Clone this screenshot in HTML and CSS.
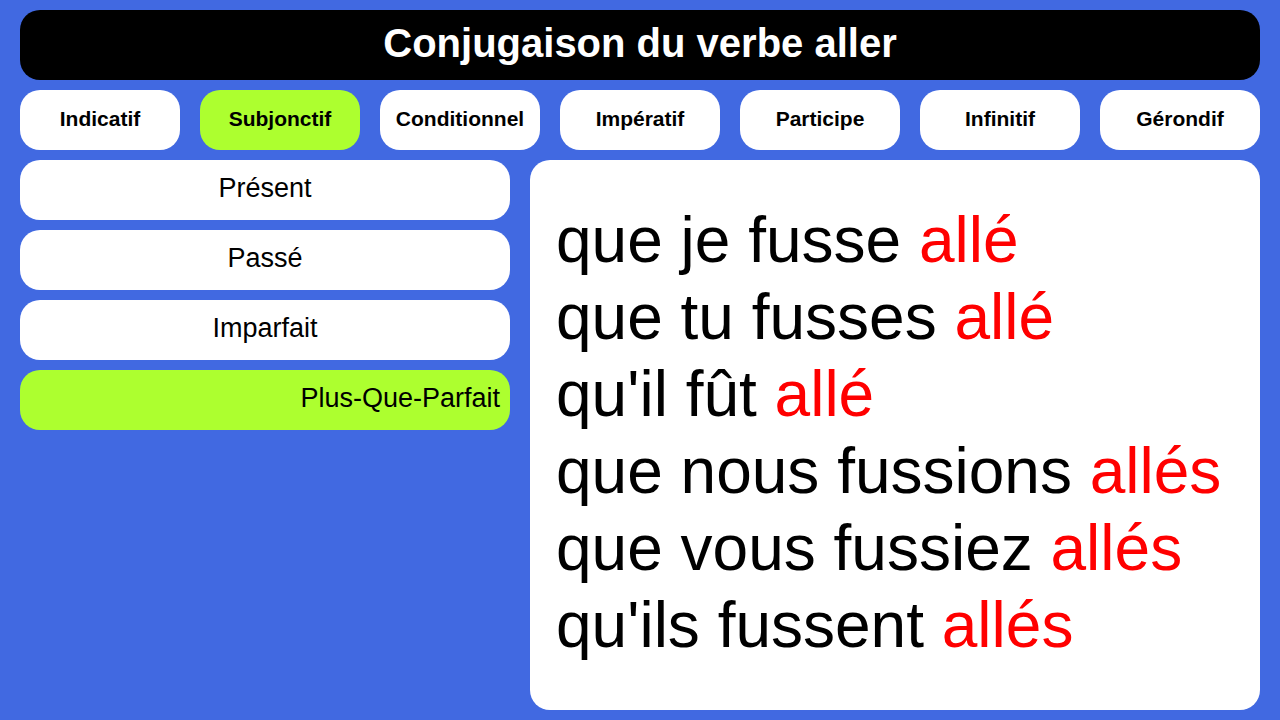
FILE: index.html
```html
<!DOCTYPE html>
<html lang="fr">
<head>
<meta charset="utf-8">
<title>Conjugaison du verbe aller</title>
<link rel="stylesheet" href="styles.css">
</head>
<body>
<div class="page">
  <header class="title">Conjugaison du verbe aller</header>
  <nav class="tabs">
    <div class="tab">Indicatif</div>
    <div class="tab active">Subjonctif</div>
    <div class="tab">Conditionnel</div>
    <div class="tab">Impératif</div>
    <div class="tab">Participe</div>
    <div class="tab">Infinitif</div>
    <div class="tab">Gérondif</div>
  </nav>
  <main class="content">
    <div class="tenses">
      <div class="tense">Présent</div>
      <div class="tense">Passé</div>
      <div class="tense">Imparfait</div>
      <div class="tense active">Plus-Que-Parfait</div>
    </div>
    <div class="panel">
      <div class="line">que je fusse <span class="red">allé</span></div>
      <div class="line">que tu fusses <span class="red">allé</span></div>
      <div class="line">qu'il fût <span class="red">allé</span></div>
      <div class="line">que nous fussions <span class="red">allés</span></div>
      <div class="line">que vous fussiez <span class="red">allés</span></div>
      <div class="line">qu'ils fussent <span class="red">allés</span></div>
    </div>
  </main>
</div>
</body>
</html>
```

FILE: styles.css
```css
html, body {
  margin: 0;
  padding: 0;
  background: #4169e1;
  font-family: "Liberation Sans", Arial, sans-serif;
}
.page {
  width: 1280px;
  height: 720px;
  box-sizing: border-box;
  padding: 10px 20px;
  display: flex;
  flex-direction: column;
  gap: 10px;
}
.title {
  height: 70px;
  background: #000;
  color: #fff;
  border-radius: 20px;
  display: flex;
  align-items: center;
  justify-content: center;
  font-weight: bold;
  font-size: 40px;
  padding-bottom: 4px;
  box-sizing: border-box;
}
.tabs {
  display: flex;
  gap: 20px;
  height: 60px;
}
.tab {
  width: 160px;
  background: #fff;
  border-radius: 20px;
  display: flex;
  align-items: center;
  justify-content: center;
  font-weight: bold;
  font-size: 21px;
  color: #000;
  padding-bottom: 3px;
  box-sizing: border-box;
}
.tab.active, .tense.active {
  background: #adff2f;
}
.content {
  flex: 1;
  display: grid;
  grid-template-columns: 490px 730px;
  gap: 20px;
}
.tenses {
  display: flex;
  flex-direction: column;
  gap: 10px;
}
.tense {
  height: 60px;
  background: #fff;
  border-radius: 20px;
  display: flex;
  align-items: center;
  justify-content: center;
  font-size: 27px;
  color: #000;
  padding: 0 10px 3px;
  box-sizing: border-box;
}
.tense.active {
  justify-content: flex-end;
}
.panel {
  background: #fff;
  border-radius: 20px;
  padding: 42px 26px 0;
  box-sizing: border-box;
}
.line {
  font-size: 64px;
  line-height: 77px;
  color: #000;
  white-space: nowrap;
}
.red {
  color: #ff0000;
}
```
